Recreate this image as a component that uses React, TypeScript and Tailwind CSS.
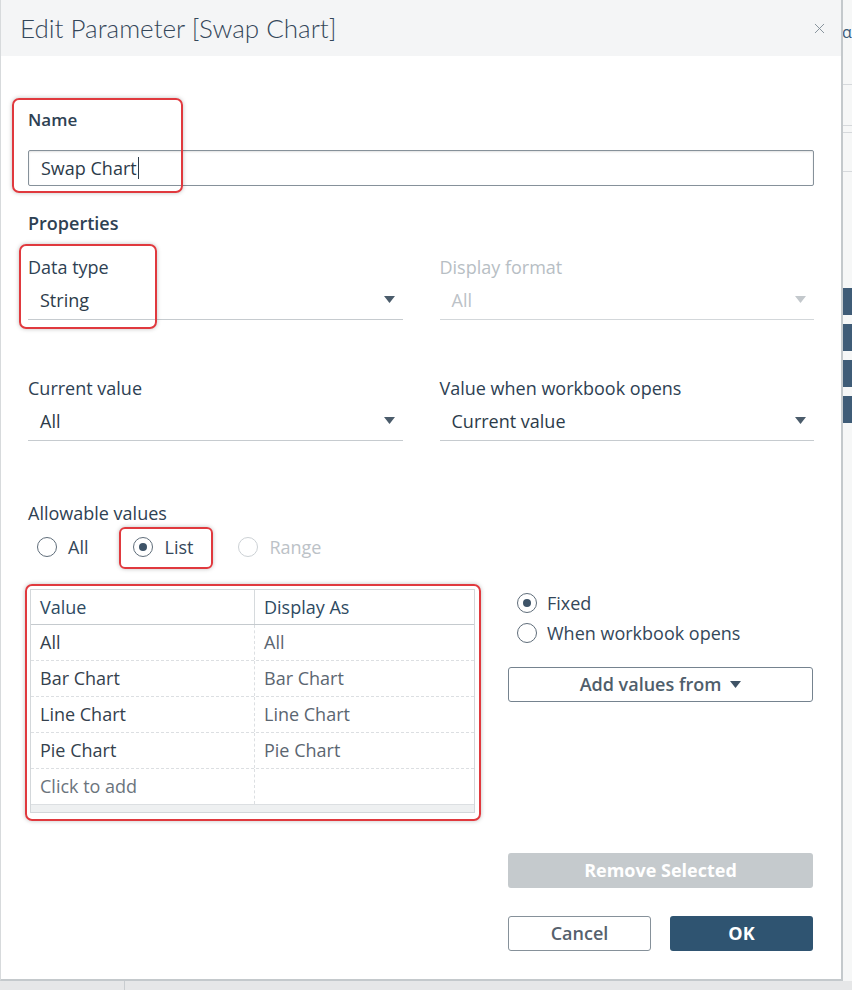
import React from 'react';
import { X } from 'lucide-react';

const rows = [
  { value: 'All', display: 'All' },
  { value: 'Bar Chart', display: 'Bar Chart' },
  { value: 'Line Chart', display: 'Line Chart' },
  { value: 'Pie Chart', display: 'Pie Chart' },
];

export default function App() {
  return (
    <div className="w-[852px] h-[990px] bg-[#e9ebec] overflow-hidden font-['Open_Sans',sans-serif] text-[#2e4153]">
      <div className="flex">
        {/* Dialog */}
        <div className="relative w-[843px] h-[981px] bg-white border-l border-l-[#d7dadc] border-r-2 border-r-[#c4c9cc] border-b-2 border-b-[#c4c9cc]">
          <div className="h-[56px] bg-[#f4f5f6] flex items-center justify-between pl-[19px] pr-[13px]">
            <h1 className="font-['Lato',sans-serif] text-[26px] font-light text-[#34475a]">Edit Parameter [Swap Chart]</h1>
            <X size={17} strokeWidth={1.3} className="text-[#7f8b95]" />
          </div>

          <div className="px-[27px]">
            <div className="mt-[52px] text-[17px] leading-[24px] font-semibold">Name</div>
            <div className="mt-[18px] h-[36px] border border-[#86919a] rounded-[2px] shadow-[inset_0_1px_2px_rgba(0,0,0,0.12)] flex items-center pl-[12px] text-[18px] text-[#2c3b49]">
              Swap Chart
              <span className="w-px h-[22px] bg-[#2c3b49] ml-[1px]" />
            </div>

            <div className="mt-[25px] text-[18px] leading-[24px] font-semibold">Properties</div>

            <div className="grid grid-cols-2 gap-x-[37px] mt-[20px]">
              <Field label="Data type" value="String" />
              <Field label="Display format" value="All" disabled />
            </div>

            <div className="grid grid-cols-2 gap-x-[37px] mt-[56px]">
              <Field label="Current value" value="All" />
              <Field label="Value when workbook opens" value="Current value" />
            </div>

            <div className="mt-[60px] text-[18px] leading-[24px]">Allowable values</div>
            <div className="mt-[10px] ml-[9px] flex items-center gap-[45px] h-[24px]">
              <Radio label="All" />
              <Radio label="List" checked />
              <Radio label="Range" disabled />
            </div>

            <div className="mt-[30px] flex">
              {/* Values table */}
              <div className="ml-[2px] w-[445px] h-[224px] border border-[#d3d7da] bg-[#eef0f1] flex flex-col">
                <div className="bg-white">
                  <div className="flex h-[35px] border-b border-[#c5cace] text-[18px] text-[#2e4a62]">
                    <div className="w-[224px] pl-[9px] flex items-center border-r border-[#d6dadd]">Value</div>
                    <div className="flex-1 pl-[9px] flex items-center">Display As</div>
                  </div>
                  {rows.map((r) => (
                    <div key={r.value} className="flex h-[36px] border-b border-dashed border-[#dcdfe2] text-[18px]">
                      <div className="w-[224px] pl-[9px] flex items-center border-r border-dashed border-[#dcdfe2] text-[#34414d]">{r.value}</div>
                      <div className="flex-1 pl-[9px] flex items-center text-[#5b6671]">{r.display}</div>
                    </div>
                  ))}
                  <div className="flex h-[36px] border-b border-[#dcdfe2] text-[18px]">
                    <div className="w-[224px] pl-[9px] flex items-center border-r border-dashed border-[#dcdfe2] text-[#6b747d]">Click to add</div>
                    <div className="flex-1" />
                  </div>
                </div>
              </div>

              {/* Right panel */}
              <div className="ml-[33px] w-[305px] flex flex-col">
                <div className="mt-[2px] ml-[9px] flex flex-col gap-[6px]">
                  <Radio label="Fixed" checked gap="gap-[10px]" />
                  <Radio label="When workbook opens" gap="gap-[10px]" />
                </div>
                <button className="mt-[22px] h-[35px] border border-[#75838f] rounded-[3px] flex items-center justify-center gap-[9px] text-[18px] font-semibold text-[#4f5e6b]">
                  Add values from
                  <Caret className="text-[#3f5366]" />
                </button>
                <button className="mt-[151px] h-[35px] bg-[#c5cacd] rounded-[3px] text-[18px] font-bold text-white">
                  Remove Selected
                </button>
                <div className="mt-[28px] flex gap-[19px]">
                  <button className="w-[143px] h-[35px] border border-[#86919a] rounded-[3px] text-[18px] font-semibold text-[#56616c]">
                    Cancel
                  </button>
                  <button className="w-[143px] h-[35px] bg-[#2f5471] rounded-[3px] text-[18px] font-bold text-white">
                    OK
                  </button>
                </div>
              </div>
            </div>
          </div>

          {/* Annotation boxes */}
          <div className="absolute left-[11px] top-[98px] w-[171px] h-[95px] border-2 border-[#e0393e] rounded-[7px] shadow-[0_0_4px_rgba(0,0,0,0.25)] pointer-events-none" />
          <div className="absolute left-[18px] top-[244px] w-[138px] h-[85px] border-2 border-[#e0393e] rounded-[7px] shadow-[0_0_4px_rgba(0,0,0,0.25)] pointer-events-none" />
          <div className="absolute left-[118px] top-[527px] w-[94px] h-[42px] border-2 border-[#e0393e] rounded-[6px] shadow-[0_0_4px_rgba(0,0,0,0.25)] pointer-events-none" />
          <div className="absolute left-[24px] top-[584px] w-[456px] h-[237px] border-2 border-[#e0393e] rounded-[7px] shadow-[0_0_4px_rgba(0,0,0,0.25)] pointer-events-none" />
        </div>

        {/* Background app peeking on the right */}
        <div className="flex-1 h-[981px] bg-[#f6f7f7] flex flex-col overflow-hidden">
          <div className="mt-[22px] text-[16px] leading-[20px] text-[#3a5a7a] -ml-[1px]">α</div>
          <div className="mt-[42px] h-px bg-[#d6d9dc]" />
          <div className="mt-[40px] h-px bg-[#d6d9dc]" />
          <div className="mt-[6px] h-px bg-[#d6d9dc]" />
          <div className="mt-[38px] h-px bg-[#d6d9dc]" />
          <div className="mt-[116px] h-[27px] bg-[#3f5c77]" />
          <div className="mt-[9px] h-[27px] bg-[#3f5c77]" />
          <div className="mt-[9px] h-[27px] bg-[#3f5c77]" />
          <div className="mt-[9px] h-[27px] bg-[#3f5c77]" />
        </div>
      </div>
      <div className="h-[9px] bg-[#e6e7e8] flex">
        <div className="w-[125px] border-r border-[#c9cdd0]" />
      </div>
    </div>
  );
}

function Field({ label, value, disabled }: { label: string; value: string; disabled?: boolean }) {
  return (
    <div>
      <div className={`text-[18px] leading-[24px] ${disabled ? 'text-[#b7bec4]' : 'text-[#2e4153]'}`}>{label}</div>
      <div className={`h-[41px] border-b flex items-center justify-between pl-[12px] pr-[8px] text-[18px] ${disabled ? 'border-[#d3d7da] text-[#bcc2c7]' : 'border-[#c6cbcf] text-[#2c3b49]'}`}>
        <span className="pt-[3px]">{value}</span>
        <Caret className={disabled ? 'text-[#c3c8cc]' : 'text-[#4b5c6b]'} />
      </div>
    </div>
  );
}

function Caret({ className }: { className?: string }) {
  return (
    <svg width="11" height="7" viewBox="0 0 11 7" className={className}>
      <path d="M0 0 H11 L5.5 7 Z" fill="currentColor" />
    </svg>
  );
}

function Radio({ label, checked, disabled, gap = 'gap-[11px]' }: { label: string; checked?: boolean; disabled?: boolean; gap?: string }) {
  return (
    <div className={`flex items-center h-[24px] ${gap}`}>
      <span className={`w-[20px] h-[20px] rounded-full border flex items-center justify-center ${disabled ? 'border-[#ccd1d5]' : 'border-[#5f6d7a]'}`}>
        {checked && <span className="w-[8px] h-[8px] rounded-full bg-[#3e5468]" />}
      </span>
      <span className={`text-[18px] ${disabled ? 'text-[#bcc2c7]' : 'text-[#34475a]'}`}>{label}</span>
    </div>
  );
}
